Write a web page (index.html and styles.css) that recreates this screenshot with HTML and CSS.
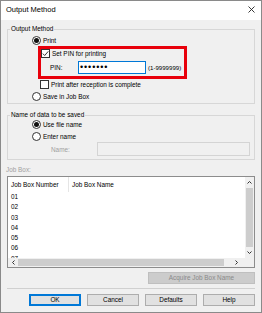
FILE: index.html
```html
<!DOCTYPE html>
<html lang="en">

<head>
    <meta charset="UTF-8">
    <title>Output Method</title>
    <link rel="stylesheet" href="styles.css">
</head>

<body>
    <div class="window">
        <div class="titlebar">
            <span class="title">Output Method</span>
            <svg class="close" width="7" height="7" viewBox="0 0 7 7">
                <path d="M0.5 0.5 L6.5 6.5 M6.5 0.5 L0.5 6.5" stroke="#222" stroke-width="0.9" fill="none" />
            </svg>
        </div>

        <div class="dialog">
            <!-- Output Method group -->
            <fieldset class="group group-output">
                <legend>Output Method</legend>
                <div class="opt opt-print"><span class="radio checked"></span>Print</div>

                <div class="highlight">
                    <div class="opt"><span class="check checked">
                            <svg width="7" height="7" viewBox="0 0 7 7">
                                <path d="M0.8 3.6 L2.7 5.5 L6.3 1.3" stroke="#222" stroke-width="0.9" fill="none" />
                            </svg>
                        </span>Set PIN for printing</div>
                    <div class="pin-row">
                        <span class="pin-label">PIN:</span>
                        <span class="pin-input">•••••••</span>
                        <span class="range">(1-9999999)</span>
                    </div>
                </div>

                <div class="opt opt-after"><span class="check"></span>Print after reception is complete</div>
                <div class="opt opt-save"><span class="radio"></span>Save in Job Box</div>
            </fieldset>

            <!-- Name group -->
            <fieldset class="group group-name">
                <legend>Name of data to be saved</legend>
                <div class="opt opt-file"><span class="radio checked"></span>Use file name</div>
                <div class="opt opt-enter"><span class="radio"></span>Enter name</div>
                <div class="name-row">
                    <span class="name-label">Name:</span>
                    <span class="name-input"></span>
                </div>
            </fieldset>

            <div class="jobbox-label">Job Box:</div>
            <div class="list">
                <div class="list-main">
                    <div class="list-head">
                        <span class="col col-num">Job Box Number</span>
                        <span class="col col-name">Job Box Name</span>
                    </div>
                    <div class="list-rows">
                        <div class="list-row">01</div>
                        <div class="list-row">02</div>
                        <div class="list-row">03</div>
                        <div class="list-row">04</div>
                        <div class="list-row">05</div>
                        <div class="list-row">06</div>
                        <div class="list-row">07</div>
                    </div>
                </div>
                <div class="vscroll">
                    <span class="arrow">
                        <svg width="5" height="3" viewBox="0 0 5 3"><path d="M0.5 2.5 L2.5 0.5 L4.5 2.5" stroke="#333" stroke-width="1" fill="none" /></svg>
                    </span>
                    <span class="vthumb"></span>
                    <span class="arrow">
                        <svg width="5" height="3" viewBox="0 0 5 3"><path d="M0.5 0.5 L2.5 2.5 L4.5 0.5" stroke="#333" stroke-width="1" fill="none" /></svg>
                    </span>
                </div>
                <div class="hscroll">
                    <span class="arrow">
                        <svg width="3" height="5" viewBox="0 0 3 5"><path d="M2.5 0.5 L0.5 2.5 L2.5 4.5" stroke="#333" stroke-width="1" fill="none" /></svg>
                    </span>
                    <span class="hthumb"></span>
                    <span class="arrow arrow-right">
                        <svg width="3" height="5" viewBox="0 0 3 5"><path d="M0.5 0.5 L2.5 2.5 L0.5 4.5" stroke="#333" stroke-width="1" fill="none" /></svg>
                    </span>
                </div>
                <div class="corner"></div>
            </div>

            <button class="btn btn-acquire" disabled>Acquire Job Box Name</button>
            <div class="separator"></div>

            <div class="buttons">
                <button class="btn btn-default">OK</button>
                <button class="btn">Cancel</button>
                <button class="btn">Defaults</button>
                <button class="btn">Help</button>
            </div>
        </div>
    </div>
</body>

</html>
```

FILE: styles.css
```css
* {
    box-sizing: border-box;
}

body {
    margin: 0;
    background-color: white;
    color: black;
    font-family: "Liberation Sans", Arial, sans-serif;
    font-size: 6.4px;
}

.window {
    width: 262px;
    height: 313px;
    border: 1px solid #8a8a8a;
    background-color: #f0f0f0;
    display: flex;
    flex-direction: column;
}

.titlebar {
    height: 19px;
    background-color: white;
    display: flex;
    align-items: center;
    justify-content: space-between;
    padding: 0 6px 2px 5px;
}

.title {
    font-size: 7.5px;
}

.dialog {
    flex: 1;
    display: flex;
    flex-direction: column;
    padding: 0 6px;
}

/* group boxes */
.group {
    margin: 4px 0 0;
    padding: 0 0 2px;
    border: 1px solid #d7d7d7;
    min-inline-size: auto;
}

.group legend {
    margin-left: 2px;
    padding: 0 1px;
    height: 10px;
    line-height: 10px;
}

.group-name {
    margin-top: 6px;
    padding-bottom: 3px;
}

.opt {
    display: flex;
    align-items: center;
    gap: 2px;
    height: 9px;
    white-space: nowrap;
}

.opt-print {
    margin: 2px 0 0 24px;
}

.opt-after {
    margin: 1px 0 0 32px;
}

.opt-save {
    margin: 3px 0 0 24px;
}

.opt-file {
    margin: 0 0 0 24px;
}

.opt-enter {
    margin: 3px 0 0 24px;
}

.radio {
    width: 9px;
    height: 9px;
    border: 1px solid #333;
    border-radius: 50%;
    background-color: white;
    display: flex;
    align-items: center;
    justify-content: center;
    flex-shrink: 0;
}

.radio.checked::after {
    content: "";
    width: 5px;
    height: 5px;
    border-radius: 50%;
    background-color: #111;
}

.check {
    width: 9px;
    height: 9px;
    border: 1px solid #333;
    background-color: white;
    display: flex;
    align-items: center;
    justify-content: center;
    flex-shrink: 0;
}

.highlight {
    margin: 1px 0 0 30px;
    width: 149px;
    border: 3px solid #e8000b;
    padding: 0 0 2px;
}

.pin-row {
    display: flex;
    align-items: center;
    height: 13px;
    margin-top: 3px;
    white-space: nowrap;
}

.pin-label {
    margin-left: 9px;
    width: 28px;
}

.pin-input {
    width: 68px;
    height: 13px;
    border: 1px solid #0078d7;
    background-color: white;
    padding-left: 1px;
    font-size: 9px;
    line-height: 11px;
    letter-spacing: 0.9px;
}

.range {
    margin-left: 2px;
    font-size: 6.1px;
}

.name-row {
    display: flex;
    align-items: center;
    height: 14px;
    margin-top: 1px;
}

.name-label {
    margin-left: 43px;
    width: 46px;
    color: #a0a0a0;
}

.name-input {
    width: 153px;
    height: 14px;
    border: 1px solid #d4d4d4;
}

.jobbox-label {
    margin: 5px 0 0 -1px;
    height: 10px;
    line-height: 10px;
    color: #a0a0a0;
}

/* list view */
.list {
    margin-top: 1px;
    height: 92px;
    border: 1px solid #8c8c8c;
    background-color: white;
    display: grid;
    grid-template-columns: 1fr 9px;
    grid-template-rows: 1fr 9px;
    overflow: hidden;
}

.list-main {
    overflow: hidden;
}

.list-head {
    display: flex;
    height: 15px;
    line-height: 15px;
}

.col {
    padding-left: 3px;
}

.col-num {
    width: 61px;
    border-right: 1px solid #e5e5e5;
}

.list-row {
    height: 10.25px;
    line-height: 10.25px;
    padding-left: 3px;
}

.vscroll {
    background-color: #f0f0f0;
    display: flex;
    flex-direction: column;
    align-items: center;
}

.vscroll .arrow {
    height: 11px;
    display: flex;
    align-items: center;
}

.vthumb {
    flex: 1;
    width: 7px;
    background-color: #cdcdcd;
}

.hscroll {
    background-color: #f0f0f0;
    display: flex;
    align-items: center;
}

.hscroll .arrow {
    width: 10px;
    display: flex;
    justify-content: center;
}

.hthumb {
    width: 206px;
    height: 7px;
    background-color: #cdcdcd;
}

.hscroll .arrow-right {
    margin-left: auto;
    width: 18px;
}

.corner {
    background-color: #f0f0f0;
}

/* buttons */
.btn {
    font-family: inherit;
    font-size: inherit;
    color: black;
    height: 12px;
    width: 52px;
    padding: 0;
    border: 1px solid #adadad;
    background-color: #e1e1e1;
    line-height: 10px;
}

.btn-default {
    border-color: #0078d7;
    box-shadow: inset 0 0 0 1px #0078d7;
}

.btn-acquire {
    align-self: flex-end;
    width: 107px;
    margin-top: 4px;
    background-color: #cccccc;
    border-color: #bfbfbf;
    color: #8a8a8a;
}

.separator {
    margin-top: 4px;
    border-top: 1px solid #d0d0d0;
}

.buttons {
    margin-top: 5px;
    display: flex;
    justify-content: flex-end;
    gap: 6px;
}
```
